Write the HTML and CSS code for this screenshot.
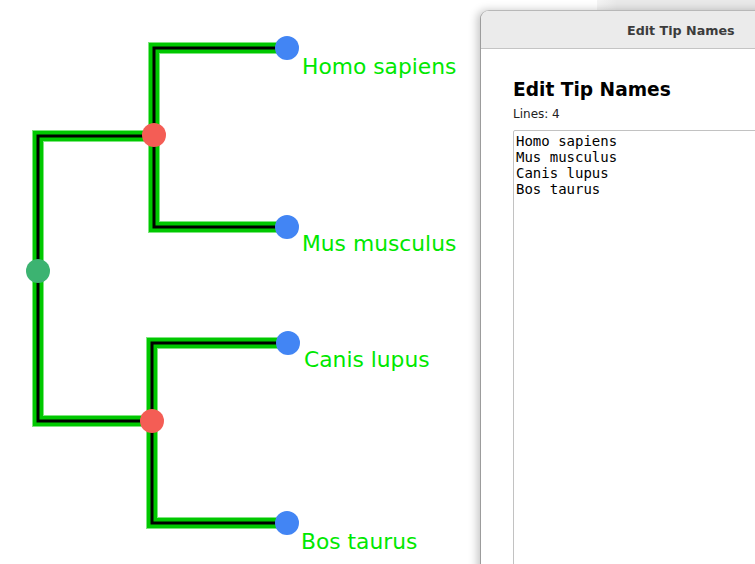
FILE: index.html
```html
<!DOCTYPE html>
<html>
<head>
<meta charset="utf-8">
<link rel="stylesheet" href="styles.css">
</head>
<body>
<div class="desk">
  <svg class="tree" width="470" height="564" viewBox="0 0 470 564" xmlns="http://www.w3.org/2000/svg">
    <g fill="none" stroke-linejoin="miter" stroke-linecap="square">
      <g stroke="#7fe67f" stroke-width="12">
        <path d="M287 48 H154 V227 H287"/>
        <path d="M154 136 H38 V421 H152"/>
        <path d="M288 343 H152 V523 H288"/>
      </g>
      <g stroke="#00c800" stroke-width="10">
        <path d="M287 48 H154 V227 H287"/>
        <path d="M154 136 H38 V421 H152"/>
        <path d="M288 343 H152 V523 H288"/>
      </g>
      <g stroke="#000" stroke-width="3" stroke-linecap="butt">
        <path d="M287 48 H154 V227 H287"/>
        <path d="M154 136 H38 V421 H152"/>
        <path d="M288 343 H152 V523 H288"/>
      </g>
    </g>
    <circle cx="38" cy="271" r="12" fill="#3cb371"/>
    <circle cx="154" cy="135" r="12" fill="#f45d55"/>
    <circle cx="152" cy="421" r="12" fill="#f45d55"/>
    <circle cx="287" cy="48" r="12" fill="#4285f4"/>
    <circle cx="287" cy="227" r="12" fill="#4285f4"/>
    <circle cx="288" cy="343" r="12" fill="#4285f4"/>
    <circle cx="287" cy="523" r="12" fill="#4285f4"/>
    <g class="tip">
      <text x="302" y="74">Homo sapiens</text>
      <text x="302" y="251">Mus musculus</text>
      <text x="304" y="367">Canis lupus</text>
      <text x="301" y="549">Bos taurus</text>
    </g>
  </svg>

  <div class="behind"></div>

  <div class="window">
    <div class="titlebar">Edit Tip Names</div>
    <div class="body">
      <h1 class="heading">Edit Tip Names</h1>
      <div class="count">Lines: 4</div>
      <textarea class="names" spellcheck="false">Homo sapiens
Mus musculus
Canis lupus
Bos taurus</textarea>
    </div>
  </div>
</div>
</body>
</html>
```

FILE: styles.css
```css
html, body {
  margin: 0;
  padding: 0;
  background: #ffffff;
  overflow: hidden;
}

.desk {
  position: relative;
  width: 755px;
  height: 564px;
  overflow: hidden;
  background: #ffffff;
}

.tree {
  position: absolute;
  left: 0;
  top: 0;
}

.tip text {
  font-family: "DejaVu Sans", sans-serif;
  font-size: 21.8px;
  fill: #00e800;
}

.behind {
  position: absolute;
  left: 597px;
  top: 0;
  width: 170px;
  height: 10px;
  background: linear-gradient(to right, #f4f4f4, #e9e9e9 20px);
}

.window {
  position: absolute;
  left: 480px;
  top: 10px;
  width: 320px;
  height: 600px;
  background: #ffffff;
  border-left: 1px solid #9c9c9c;
  border-top: 1px solid #b8b8b8;
  border-radius: 9px 0 0 0;
  box-shadow: -3px 0 9px rgba(0, 0, 0, 0.22);
  display: flex;
  flex-direction: column;
  overflow: hidden;
}

.titlebar {
  height: 38px;
  flex: none;
  background: #ebebeb;
  border-bottom: 1px solid #c4c4c4;
  box-sizing: border-box;
  padding-left: 146px;
  padding-top: 1px;
  display: flex;
  align-items: center;
  font-family: "DejaVu Sans", sans-serif;
  font-weight: bold;
  font-size: 12.7px;
  color: #3c3c3c;
  white-space: nowrap;
}

.body {
  padding: 28px 0 0 32px;
  display: flex;
  flex-direction: column;
}

.heading {
  margin: 0;
  font-family: "DejaVu Sans", sans-serif;
  font-weight: bold;
  font-size: 18.6px;
  line-height: 26px;
  color: #000;
}

.count {
  margin-top: 3px;
  font-family: "DejaVu Sans", sans-serif;
  font-size: 12px;
  line-height: 16px;
  color: #222;
}

.names {
  margin-top: 8px;
  width: 300px;
  height: 460px;
  box-sizing: border-box;
  border: 1px solid #c2c2c2;
  border-radius: 2px;
  padding: 2px 2px;
  resize: none;
  font-family: "DejaVu Sans Mono", monospace;
  font-size: 14px;
  line-height: 16px;
  color: #000;
  background: #fff;
  outline: none;
}
```
